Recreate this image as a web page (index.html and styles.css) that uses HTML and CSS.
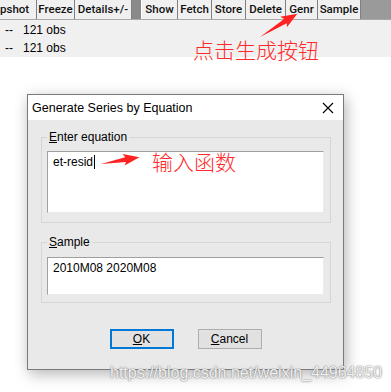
FILE: index.html
```html
<!DOCTYPE html>
<html lang="en">
<head>
    <meta charset="UTF-8">
    <meta name="viewport" content="width=device-width, initial-scale=1.0">
    <title>Generate Series by Equation</title>
    <link rel="stylesheet" href="styles.css">
</head>
<body>
    <div class="toolbar">
        <div class="tb-btn w-pshot">pshot</div>
        <div class="tb-btn w-freeze">Freeze</div>
        <div class="tb-btn w-details">Details+/-</div>
        <div class="tb-gap"></div>
        <div class="tb-btn w-show">Show</div>
        <div class="tb-btn w-fetch">Fetch</div>
        <div class="tb-btn w-store">Store</div>
        <div class="tb-btn w-delete">Delete</div>
        <div class="tb-btn w-genr">Genr</div>
        <div class="tb-btn w-sample">Sample</div>
        <div class="tb-rest"></div>
    </div>

    <div class="obs-panel">
        <div class="obs-row"><span class="dash">--</span>121 obs</div>
        <div class="obs-row"><span class="dash">--</span>121 obs</div>
    </div>

    <div class="dialog">
        <div class="title-bar">
            <span class="title">Generate Series by Equation</span>
            <svg class="close" width="12" height="12" viewBox="0 0 12 12">
                <path d="M1 1 L11 11 M11 1 L1 11" stroke="#000" stroke-width="1.1" fill="none"/>
            </svg>
        </div>
        <div class="dialog-body">
            <fieldset class="group">
                <legend><u>E</u>nter equation</legend>
                <div class="field tall">et-resid<span class="caret"></span></div>
            </fieldset>
            <fieldset class="group">
                <legend><u>S</u>ample</legend>
                <div class="field short">2010M08 2020M08</div>
            </fieldset>
            <div class="buttons">
                <div class="btn default"><u>O</u>K</div>
                <div class="btn"><u>C</u>ancel</div>
            </div>
        </div>
    </div>

    <!-- red annotations drawn over the screenshot -->
    <div class="note note-genr">点击生成按钮</div>
    <div class="note note-eq">输入函数</div>
    <svg class="arrows" width="391" height="392" viewBox="0 0 391 392">
        <g transform="translate(260 37) rotate(-32)">
            <polygon points="0,0 30,-2.5 28,-6.5 44,0 28,6 30,2.5" fill="#f22"/>
        </g>
        <g transform="translate(101 164) rotate(-10)">
            <polygon points="0,0 25,-2.5 23,-6 39,0 23,5.5 25,2.5" fill="#f22"/>
        </g>
    </svg>

    <div class="watermark">https://blog.csdn.net/weixin_44964850</div>
</body>
</html>
```

FILE: styles.css
```css
* {
    margin: 0;
    padding: 0;
    box-sizing: border-box;
}

body {
    font-family: 'Liberation Sans', Arial, sans-serif;
    font-size: 12px;
    background: #fff;
    color: #000;
    width: 391px;
    height: 392px;
    overflow: hidden;
    position: relative;
}

/* toolbar */
.toolbar {
    display: flex;
    height: 20px;
    border-bottom: 1px solid #a8a8a8;
    font-family: Roboto, 'Liberation Sans', sans-serif;
    font-size: 11.5px;
    font-weight: 500;
}

.tb-btn {
    background: #f0f0f0;
    border-right: 1px solid #808080;
    line-height: 19px;
    text-align: center;
    white-space: nowrap;
    overflow: hidden;
    color: #111;
}

.w-pshot { width: 37px; text-align: left; }
.w-freeze { width: 38px; }
.w-details { width: 57px; }
.w-show { width: 37px; border-left: 1px solid #fff; }
.w-fetch { width: 34px; }
.w-store { width: 34px; }
.w-delete { width: 40px; }
.w-genr { width: 32px; }
.w-sample { width: 43px; }

.tb-gap {
    width: 9px;
    background: #8a8a8a;
}

.tb-rest {
    flex: 1;
    background: #9a9a9a;
}

/* obs list */
.obs-panel {
    background: #f0f0f0;
    height: 37px;
    padding-top: 1px;
}

.obs-row {
    height: 18px;
    line-height: 18px;
    padding-left: 5px;
}

.dash {
    display: inline-block;
    width: 18px;
}

/* dialog window */
.dialog {
    position: absolute;
    left: 27px;
    top: 94px;
    width: 317px;
    height: 276px;
    border: 1px solid #7a7a7a;
    background: #e9e9e9;
    box-shadow: 2px 4px 14px rgba(0, 0, 0, 0.3);
}

.title-bar {
    height: 25px;
    background: #fff;
    display: flex;
    align-items: center;
    justify-content: space-between;
    padding-left: 4px;
    padding-right: 9px;
}

.title {
    font-size: 12.5px;
    color: #000;
}

.dialog-body {
    display: flex;
    flex-direction: column;
    padding: 10px 12px 0 13px;
}

.group {
    border: 1px solid #d6d6d6;
    padding: 6px 6px 9px 5px;
}

.group + .group {
    margin-top: 12px;
    padding-top: 7px;
    padding-bottom: 7px;
}

.group legend {
    padding: 0 2px;
    line-height: 15px;
}

.field {
    background: #fff;
    border-top: 1px solid #a0a0a0;
    border-left: 1px solid #a0a0a0;
    border-right: 1px solid #ebebeb;
    border-bottom: 1px solid #ebebeb;
    padding: 3px 5px;
    line-height: 15px;
}

.field.tall {
    height: 62px;
}

.field.short {
    height: 38px;
}

.caret {
    display: inline-block;
    width: 1px;
    height: 14px;
    background: #000;
    vertical-align: -3px;
    margin-left: 1px;
}

.buttons {
    display: flex;
    justify-content: center;
    gap: 24px;
    margin-top: 26px;
    padding-right: 1px;
}

.btn {
    width: 64px;
    height: 20px;
    background: #e1e1e1;
    border: 1px solid #adadad;
    text-align: center;
    line-height: 18px;
}

.btn.default {
    border: 2px solid #0078d7;
    line-height: 16px;
}

/* annotations */
.note {
    position: absolute;
    font-family: 'Noto Sans CJK SC', sans-serif;
    font-size: 21px;
    line-height: 24px;
    color: #ff2a2a;
    font-weight: 300;
}

.note-genr {
    left: 193px;
    top: 37px;
}

.note-eq {
    left: 152px;
    top: 149px;
}

.arrows {
    position: absolute;
    left: 0;
    top: 0;
    pointer-events: none;
}

.watermark {
    position: absolute;
    left: 110px;
    top: 364px;
    font-size: 16px;
    color: rgba(255, 255, 255, 0.9);
    text-shadow: 0 0 1px #777, 0 0 2px #999;
    white-space: nowrap;
}
```
